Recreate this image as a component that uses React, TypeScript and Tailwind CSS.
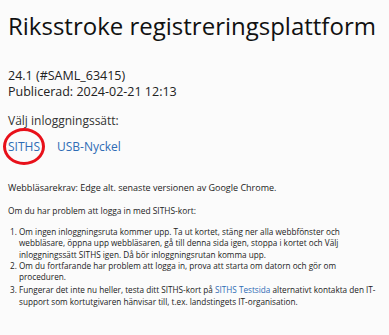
export default function App() {
  return (
    <div className="w-[389px] h-[335px] bg-[#fbfbfb] text-[#1a1a1a] font-['Open_Sans',sans-serif] overflow-hidden">
      <div className="pl-[8px] pt-[10px]">
        <h1 className="text-[24px] leading-[32px] whitespace-nowrap text-[#111]">Riksstroke registreringsplattform</h1>
        <div className="mt-[26px] text-[12.5px] leading-[16px] text-[#222]">
          <div>24.1 (#SAML_63415)</div>
          <div>Publicerad: 2024-02-21 12:13</div>
        </div>
        <div className="mt-[13px] text-[12px] leading-[16px] text-[#333]">Välj inloggningssätt:</div>
        <div className="mt-[10px] flex items-center gap-[17px] text-[12px] leading-[16px] text-[#2f6cb5]">
          <span className="relative">
            SITHS
            <span className="absolute left-[-5px] top-[-11px] w-[42px] h-[37px] rounded-[50%] border-[3px] border-[#e8101a]" />
          </span>
          <span>USB-Nyckel</span>
        </div>
        <div className="mt-[27px] text-[9px] leading-[12px] text-[#222]">
          Webbläsarekrav: Edge alt. senaste versionen av Google Chrome.
        </div>
        <div className="mt-[11px] text-[8.4px] leading-[12px] text-[#222]">Om du har problem att logga in med SITHS-kort:</div>
        <ol className="mt-[9px] list-decimal pl-[11px] pr-[4px] text-[8.2px] leading-[11.3px] text-[#222]">
          <li className="pr-[12px]">Om ingen inloggningsruta kommer upp. Ta ut kortet, stäng ner alla webbfönster och webbläsare, öppna upp webbläsaren, gå till denna sida igen, stoppa i kortet och Välj inloggningssätt SITHS igen. Då bör inloggningsrutan komma upp.</li>
          <li className="pr-[12px]">Om du fortfarande har problem att logga in, prova att starta om datorn och gör om proceduren.</li>
          <li className="mt-[2px]">Fungerar det inte nu heller, testa ditt SITHS-kort på <span className="text-[#2f6cb5]">SITHS Testsida</span> alternativt kontakta den IT-support som kortutgivaren hänvisar till, t.ex. landstingets IT-organisation.</li>
        </ol>
      </div>
    </div>
  );
}
